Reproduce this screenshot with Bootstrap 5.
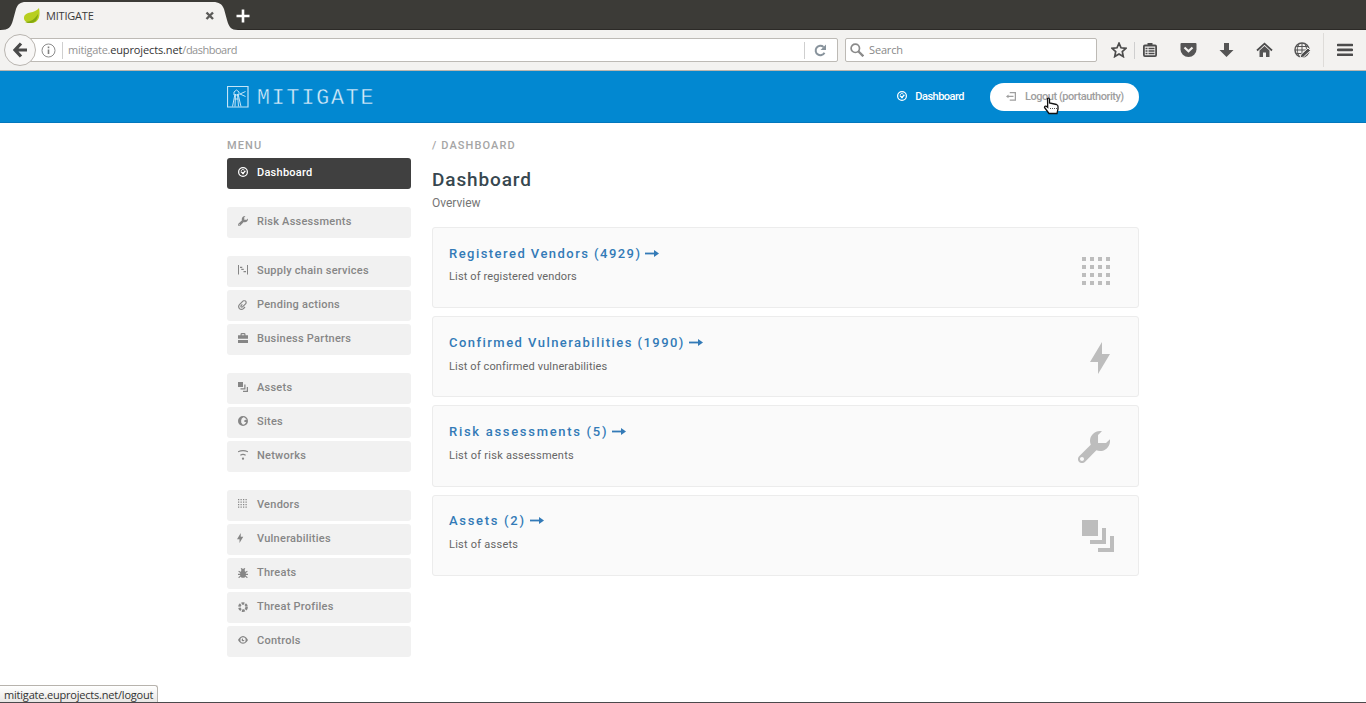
<!DOCTYPE html>
<html lang="en">
<head>
<meta charset="utf-8">
<meta name="viewport" content="width=device-width, initial-scale=1">
<title>MITIGATE</title>
<link href="https://cdn.jsdelivr.net/npm/bootstrap@5.3.0/dist/css/bootstrap.min.css" rel="stylesheet">
<style>
body{font-family:Roboto,sans-serif;height:703px;overflow:hidden;background:#fff;color:#666;position:relative}
svg{display:block;flex:none}
.chrome-ui{font-family:"Open Sans","Noto Sans",sans-serif;font-size:11px}
.tabstrip{height:30px;background:#3c3b37;border-bottom:1px solid #2c2a27}
.tab-shape{width:238px;height:30px;position:relative;z-index:1}
.tab-bg{position:absolute;left:0;top:0}
.tab-body{position:relative;height:30px;padding:2px 22px 0 23px;color:#3a3a3a;letter-spacing:-.2px}
.toolbar{height:41px;background:#f3f2f0;border-bottom:1px solid #bbb6af;padding:0 13px 0 4px}
.back-btn{width:32px;height:32px;border:1px solid #b9b5b0;border-radius:50%;background:#f8f7f6;position:relative;z-index:1;flex:none}
.urlbar{height:24px;width:809px;margin-left:-7px;background:#fff;border:1px solid #bdbab5;border-radius:2px;padding-left:11px;color:#929292;flex:none;letter-spacing:-.29px}
.sep{width:1px;height:17px;background:#cfcfcf}
.searchbar{height:24px;width:252px;margin-left:7px;background:#fff;border:1px solid #bdbab5;border-radius:2px;color:#888;padding-left:4px;flex:none;letter-spacing:-.15px}
.site-head{height:52px;background:#0288d1;border-bottom:1px solid #0277bd}
.wrap{width:912px;margin-left:227px}
.logo-text{font-family:"Liberation Mono",monospace;font-size:21.5px;letter-spacing:1.9px;line-height:26px;color:#d8effc;margin:2px 0 0 8px;-webkit-text-stroke:.4px #0288d1}
.head-link{font-size:11px;font-weight:500;color:#fff;text-decoration:none;line-height:28px;letter-spacing:-.5px}
.logout{width:149px;height:28px;background:#fff;color:#9e9e9e;padding-left:16px;letter-spacing:-.46px}
.crumb{font-size:11px;font-weight:500;line-height:14px;color:#a5a5a5;letter-spacing:1.1px}
.side{width:184px}
.menu-item{height:31px;border-radius:3px;background:#f1f1f1;color:#868686;font-size:11px;line-height:16px;font-weight:500;letter-spacing:.25px;padding:0 11px 1px;text-decoration:none;gap:9px}
.menu-item svg{margin-top:-3px}
.menu-item.on{background:#404040;color:#fff}
.main-col{width:707px}
.page-title{font-size:19px;font-weight:500;letter-spacing:.88px;line-height:24px;color:#37474f;margin:15px 0 0}
.sub{font-size:12px;line-height:16px;margin-top:3px;color:#757575}
.tile{height:81.200px;background:#fafafa;border:1px solid #ececec;border-radius:3px;padding:16.500px 24px 0 16px}
.tile-title{font-size:13px;font-weight:500;letter-spacing:1.46px;line-height:18px;color:#337ab7;text-decoration:none;gap:4px}
.tile-title.loose{letter-spacing:1.7px}
.tile-title svg{margin-top:-1px}
.tile-sub{font-size:11px;line-height:16px;margin-top:6.850px;color:#666;letter-spacing:.14px}
.tile svg.big{color:#bdbdbd}
.cursor{position:absolute;left:1043px;top:97px}
.status{position:absolute;left:0;bottom:1px;height:17px;width:158px;border:1px solid #b7b3ad;border-left:0;border-bottom:0;border-radius:0 3px 0 0;background:linear-gradient(#fff,#e9e7e5);color:#333;line-height:17px;padding-left:4px;white-space:nowrap;letter-spacing:-.2px}
.edge{position:absolute;left:0;right:0;bottom:0;height:1px;background:#4b494c}
</style>
</head>
<body>
<svg width="0" height="0" class="position-absolute"><defs>
<symbol id="dial" viewBox="0 0 8 8"><circle cx="4" cy="4" r="3.500" fill="none" stroke="currentColor"/><path d="M2.300 3.300A1.900 1.900 0 0 1 5 2.300" fill="none" stroke="currentColor" stroke-width=".7"/><path d="M2.300 3.700L4 5.200 5.900 3" fill="none" stroke="currentColor" stroke-width="1"/><circle cx="4" cy="4.900" r=".8" fill="currentColor"/></symbol>
<symbol id="wrench" viewBox="0 0 8 8"><path fill="currentColor" d="M5.5 0c-1.38 0-2.5 1.12-2.5 2.5 0 .32.08.62.19.91l-2.91 2.88c-.39.39-.39 1.05 0 1.44.2.2.46.28.72.28.26 0 .52-.09.72-.28l2.88-2.91c.28.11.58.19.91.19 1.38 0 2.5-1.12 2.5-2.5 0-.16 0-.32-.03-.47l-.97.97h-2v-2l.97-.97c-.15-.03-.31-.03-.47-.03zm-4.5 6.5c.28 0 .5.22.5.5s-.22.5-.5.5-.5-.22-.5-.5.22-.5.5-.5z"/></symbol>
<symbol id="bolt" viewBox="0 0 8 8"><path fill="currentColor" d="M3 0l-3 5h2v3l3-5h-2v-3z"/></symbol>
<symbol id="layers" viewBox="0 0 8 8"><path fill="currentColor" d="M0 0v4h4v-4h-4zm5 2v3h-3v1h4v-4h-1zm2 2v3h-3v1h4v-4h-1z"/></symbol>
<symbol id="grid4" viewBox="0 0 8 8"><path fill="none" stroke="currentColor" stroke-dasharray="1 1" d="M0 .5h7M0 2.5h7M0 4.5h7M0 6.5h7"/></symbol>
<symbol id="logout" viewBox="0 0 8 8"><path fill="currentColor" d="M3 0v1h4v5h-4v1h5v-7h-5zm-1 2l-2 1.5 2 1.5v-1h4v-1h-4v-1z"/></symbol>
<symbol id="chain" viewBox="0 0 8 8"><path fill="currentColor" d="M0 0v7.500h.8V0zM7.200 0v7.500H8V0zM1.600 1.300v1h1.800v-1zM2.600 3v1h2V3zM4.400 4.700v1h2v-1z"/></symbol>
<symbol id="clip" viewBox="0 0 8 8"><path fill="currentColor" d="M5 0c-.51 0-1.02.21-1.41.59l-2.78 2.72c-1.07 1.07-1.07 2.8 0 3.88 1.07 1.07 2.8 1.07 3.88 0l1.25-1.25-.69-.69-1.16 1.13-.09.13c-.69.69-1.81.69-2.5 0-.68-.68-.66-1.78 0-2.47l2.78-2.75c.39-.39 1.04-.39 1.44 0 .39.39.37 1.01 0 1.41l-2.5 2.47c-.1.1-.27.1-.38 0-.1-.1-.1-.27 0-.38l.06-.03.91-.94-.69-.69-.97.97c-.48.48-.48 1.27 0 1.75s1.27.49 1.75 0l2.5-2.44c.78-.78.78-2.04 0-2.81-.39-.39-.89-.59-1.41-.59z"/></symbol>
<symbol id="case" viewBox="0 0 8 8"><path fill="currentColor" fill-rule="evenodd" d="M3 0h2a1 1 0 0 1 1 1v.8h2v2.800H0V1.800h2V1a1 1 0 0 1 1-1zm0 .9v.9h2V.9zM0 5.500h8V8H0z"/></symbol>
<symbol id="globe" viewBox="0 0 8 8"><path fill="currentColor" fill-rule="evenodd" d="M4 0a4 4 0 1 0 0 8 4 4 0 0 0 0-8zM4.300 1c1.200.2 2.200 1 2.600 2.100L5.800 3l-.9.8.3 1h1.400c-.5 1.200-1.500 2.100-2.700 2.200L2.600 5.400 2.500 3.500 3 2z"/></symbol>
<symbol id="wifi" viewBox="0 0 8 8"><path fill="none" stroke="currentColor" stroke-width=".9" d="M0 1.500C2.300.3 5.700.3 8 1.500M1.900 4.200c1.200-.8 3-.8 4.200 0"/><circle cx="4" cy="6.900" r=".9" fill="currentColor"/></symbol>
<symbol id="bug" viewBox="0 0 8 8"><ellipse cx="4" cy="4.900" rx="2.300" ry="2.900" fill="currentColor"/><path fill="none" stroke="currentColor" stroke-width=".9" d="M2.500.2l.8 1.200M5.500.2l-.8 1.200M.5 2.600l2 1.200M7.500 2.600l-2 1.200M0 5.100h8M.5 7.800l2-1.700M7.500 7.800l-2-1.700"/><circle cx="4" cy="1.700" r="1.300" fill="currentColor"/></symbol>
<symbol id="aperture" viewBox="0 0 8 8"><circle cx="4" cy="4" r="2.900" fill="none" stroke="currentColor" stroke-width="2" stroke-dasharray="2.240 .800"/></symbol>
<symbol id="eye" viewBox="0 0 8 8"><path fill="currentColor" fill-rule="evenodd" d="M4 .800C1.700.800 0 4 0 4s1.700 3 4 3c2.400 0 4-3 4-3S6.400.800 4 .800zM4 1.800a2.100 2.100 0 1 1 0 4.200 2.100 2.100 0 0 1 0-4.200z"/><path fill="currentColor" d="M4 2.800a1.100 1.100 0 1 0 1.100 1.100H4z"/></symbol>
<symbol id="arrow" viewBox="0 0 14 9"><path d="M0 4.500h10" stroke="currentColor" stroke-width="1.800"/><path d="M9 1l5 3.500L9 8z" fill="currentColor"/></symbol>
</defs></svg>

<div class="chrome-ui">
  <div class="tabstrip d-flex">
    <div class="tab-shape">
      <svg class="tab-bg" width="238" height="30"><path d="M0 30C9 30 11 27 13 20L16 9C18 4 20 2 26 2H213C219 2 222 4 224 9L227 20C229 27 231 30 238 30z" fill="#f3f2f0"/></svg>
      <div class="tab-body d-flex align-items-center">
        <svg width="18" height="16" viewBox="0 0 18 16"><path d="M1 9C2 3 12 6 16 0c1.500 7 .5 15-8 15C4 15 .500 13 1 9z" fill="#b8cf20"/><path d="M2 14C8 14 12 11 15 6c0 5-3 9-7 9-2 0-4 0-6-1z" fill="#84a810"/></svg>
        <span style="margin-left:5px">MITIGATE</span>
        <svg class="ms-auto" style="margin-right:1px" width="10" height="10" viewBox="0 0 10 10"><path d="M1.500 1.500l6.500 6.500M8 1.500L1.500 8" stroke="#5a5a58" stroke-width="2.400"/></svg>
      </div>
    </div>
    <svg style="margin:9px 0 0 -2px" width="14" height="14" viewBox="0 0 14 14"><path d="M7 .500v13M.500 7h13" stroke="#fff" stroke-width="2.600"/></svg>
  </div>
  <div class="toolbar d-flex align-items-center">
    <div class="back-btn d-flex align-items-center justify-content-center"><svg width="15" height="16" viewBox="0 0 15 16"><path d="M8 1.500L2 8l6 6.500M2.500 8H14" fill="none" stroke="#4a4a4a" stroke-width="3.200"/></svg></div>
    <div class="urlbar d-flex align-items-center">
      <svg width="15" height="15" viewBox="0 0 15 15"><circle cx="7.500" cy="7.500" r="6.500" fill="none" stroke="#8c8c8c"/><path d="M7.500 6.500V11M7.500 3.500v1.700" stroke="#808080" stroke-width="1.600"/></svg>
      <span class="sep" style="margin:0 5px 0 6px"></span>
      <span>mitigate.<span style="color:#333;letter-spacing:-.12px">euprojects.net</span><span style="letter-spacing:-.5px">/dashboard</span></span>
      <span class="sep ms-auto"></span>
      <svg style="margin:0 10px 0 9px" width="13" height="13" viewBox="0 0 13 13"><path d="M10.500 8.800A4.700 4.700 0 1 1 9.500 3" fill="none" stroke="#88939c" stroke-width="2"/><path d="M12 .500V6H6.500z" fill="#88939c"/></svg>
    </div>
    <div class="searchbar d-flex align-items-center">
      <svg width="14" height="14" viewBox="0 0 14 14"><circle cx="5.300" cy="5.300" r="4.200" fill="none" stroke="#8a8a8a" stroke-width="1.700"/><path d="M8.300 8.300l5 5" stroke="#8a8a8a" stroke-width="2.300"/></svg>
      <span style="margin-left:5px">Search</span>
    </div>
    <svg style="margin-left:14px" width="16" height="16" viewBox="0 0 16 16"><path d="M8 1.200l2 4.600 5 .5-3.700 3.300 1 5L8 12l-4.300 2.600 1-5L1 6.300l5-.5z" fill="none" stroke="#4c4c4c" stroke-width="1.700"/></svg>
    <span class="sep" style="margin:0 8px 0 7px"></span>
    <svg width="14" height="16" viewBox="0 0 14 16"><rect x=".9" y="3.500" width="12.200" height="10.600" rx="1" fill="none" stroke="#4c4c4c" stroke-width="1.800"/><path d="M4.500 1h5v3h-5z" fill="#4c4c4c"/><path d="M2.500 6.500h2M5.500 6.500h6M2.500 9h2M5.500 9h6M2.500 11.500h2M5.500 11.500h6" stroke="#4c4c4c" stroke-width="1.300"/></svg>
    <svg style="margin-left:22.500px" width="17" height="16" viewBox="0 0 17 16"><path d="M1.500 1h14q1 0 1 1v5.500a8 7.500 0 0 1-16 0V2q0-1 1-1z" fill="#555"/><path d="M4.500 5.500l4 3.800 4-3.800" fill="none" stroke="#f3f2f0" stroke-width="2.200"/></svg>
    <svg style="margin-left:22px" width="15" height="16" viewBox="0 0 15 16"><path d="M5 1h5v7h4.500l-7 7-7-7H5z" fill="#555"/></svg>
    <svg style="margin-left:22px" width="17" height="16" viewBox="0 0 17 16"><path d="M1 8.500L8.500 1.700 16 8.500" fill="none" stroke="#4c4c4c" stroke-width="1.800"/><path d="M3.500 8.500l5-4.500 5 4.500V15H10v-4.500H7V15H3.500z" fill="#555"/></svg>
    <svg style="margin-left:21px" width="17" height="17" viewBox="0 0 17 17"><circle cx="8" cy="8" r="7" fill="none" stroke="#555" stroke-width="1.500"/><path d="M1 8h14M8 1v14M2.500 4.500h11M2.500 11.500h9M4.800 2.500c-2 4-2 7 0 11M11.200 2.500c1.500 3 1.700 6 1 8" fill="none" stroke="#555"/><path d="M6 16l1-3.500L14 6l2.500 2.500L9.500 15z" fill="#4c4c4c" stroke="#f3f2f0"/></svg>
    <span class="sep" style="margin-left:12.500px;height:34px;background:#dedcd9"></span>
    <svg class="ms-auto" width="16" height="14" viewBox="0 0 16 14"><path d="M1 2h14M1 6.900h14M1 11.800h14" stroke="#4c4c4c" stroke-width="2.600" stroke-linecap="round"/></svg>
  </div>
</div>

<header class="site-head">
  <div class="wrap d-flex align-items-center h-100">
    <svg width="22" height="22" viewBox="0 0 22 22" fill="none" stroke="#c3e5f8"><path d="M.5.5h20.500v20.500H.5z" stroke-width="1.200"/><path d="M8 8L5.500 20.500M11 8l3 12.500M8.500 8l-.5 12.500M10.500 8l1 12.500M7 9h5V6L9.500 4 7 6zM7.500 13h4M18.500 5.500L13 8l5.500 2.500"/></svg>
    <span class="logo-text">MITIGATE</span>
    <a class="head-link d-flex align-items-center ms-auto" href="#"><svg style="margin-top:-2px" width="10" height="10"><use href="#dial"/></svg><span style="margin-left:8px">Dashboard</span></a>
    <a class="head-link logout rounded-pill d-flex align-items-center" style="margin-left:26px" href="#"><svg width="10" height="10"><use href="#logout"/></svg><span style="margin-left:9px">Logout (portauthority)</span></a>
  </div>
</header>

<div class="wrap d-flex justify-content-between" style="padding-top:16px">
  <nav class="side d-flex flex-column">
    <div class="crumb" style="margin-bottom:5px">MENU</div>
    <div class="d-flex flex-column" style="gap:18px">
      <a href="#" class="menu-item on d-flex align-items-center"><svg width="10" height="10"><use href="#dial"/></svg>Dashboard</a>
      <a href="#" class="menu-item d-flex align-items-center"><svg width="10" height="10"><use href="#wrench"/></svg>Risk Assessments</a>
      <div class="d-flex flex-column" style="gap:3px">
        <a href="#" class="menu-item d-flex align-items-center"><svg width="10" height="10"><use href="#chain"/></svg>Supply chain services</a>
        <a href="#" class="menu-item d-flex align-items-center"><svg style="margin-top:-1px" width="10" height="10"><use href="#clip"/></svg>Pending actions</a>
        <a href="#" class="menu-item d-flex align-items-center"><svg width="10" height="10"><use href="#case"/></svg>Business Partners</a>
      </div>
      <div class="d-flex flex-column" style="gap:3px">
        <a href="#" class="menu-item d-flex align-items-center"><svg width="10" height="10"><use href="#layers"/></svg>Assets</a>
        <a href="#" class="menu-item d-flex align-items-center"><svg width="10" height="10"><use href="#globe"/></svg>Sites</a>
        <a href="#" class="menu-item d-flex align-items-center"><svg width="10" height="10"><use href="#wifi"/></svg>Networks</a>
      </div>
      <div class="d-flex flex-column" style="gap:3px">
        <a href="#" class="menu-item d-flex align-items-center"><svg width="10" height="10"><use href="#grid4"/></svg>Vendors</a>
        <a href="#" class="menu-item d-flex align-items-center"><svg style="margin-left:-1.500px;margin-right:1.500px" width="10" height="10"><use href="#bolt"/></svg>Vulnerabilities</a>
        <a href="#" class="menu-item d-flex align-items-center"><svg style="margin-top:-1px" width="10" height="10"><use href="#bug"/></svg>Threats</a>
        <a href="#" class="menu-item d-flex align-items-center"><svg style="margin-top:-1px" width="10" height="10"><use href="#aperture"/></svg>Threat Profiles</a>
        <a href="#" class="menu-item d-flex align-items-center"><svg width="10" height="10"><use href="#eye"/></svg>Controls</a>
      </div>
    </div>
  </nav>
  <main class="main-col">
    <div class="crumb">/ DASHBOARD</div>
    <h1 class="page-title">Dashboard</h1>
    <div class="sub">Overview</div>
    <div class="d-flex flex-column" style="gap:8px;margin-top:16px">
      <div class="tile d-flex justify-content-between"><div><a href="#" class="tile-title d-flex align-items-center">Registered Vendors (4929)<svg width="14" height="9"><use href="#arrow"/></svg></a><div class="tile-sub">List of registered vendors</div></div><svg class="big" style="margin-top:12.500px" width="32" height="32"><use href="#grid4"/></svg></div>
      <div class="tile d-flex justify-content-between"><div><a href="#" class="tile-title d-flex align-items-center">Confirmed Vulnerabilities (1990)<svg width="14" height="9"><use href="#arrow"/></svg></a><div class="tile-sub">List of confirmed vulnerabilities</div></div><svg class="big" style="margin:8.300px -8px 0 0" width="32" height="32"><use href="#bolt"/></svg></div>
      <div class="tile d-flex justify-content-between"><div><a href="#" class="tile-title loose d-flex align-items-center">Risk assessments (5)<svg width="14" height="9"><use href="#arrow"/></svg></a><div class="tile-sub" style="letter-spacing:.24px">List of risk assessments</div></div><svg class="big" style="margin:8.100px 4px 0 0" width="32" height="32"><use href="#wrench"/></svg></div>
      <div class="tile d-flex justify-content-between"><div><a href="#" class="tile-title loose d-flex align-items-center">Assets (2)<svg width="14" height="9"><use href="#arrow"/></svg></a><div class="tile-sub" style="letter-spacing:.24px">List of assets</div></div><svg class="big" style="margin-top:7.900px" width="32" height="32"><use href="#layers"/></svg></div>
    </div>
  </main>
</div>

<svg class="cursor" width="18" height="18" viewBox="0 0 18 18"><path d="M4.500 1.500q2-1 2 1V6l7 1.500q1.500.5 1.500 2V12l-1 4.500H6L1.500 10.500q0-2 2-1.200l1.200 1z" fill="#fff" stroke="#111" stroke-width="1.300"/><path d="M7 11.500h7" stroke="#555" stroke-dasharray="1 1"/></svg>
<div class="status chrome-ui">mitigate.euprojects.net/logout</div>
<div class="edge"></div>
<script src="https://cdn.jsdelivr.net/npm/bootstrap@5.3.0/dist/js/bootstrap.bundle.min.js"></script>
</body>
</html>
